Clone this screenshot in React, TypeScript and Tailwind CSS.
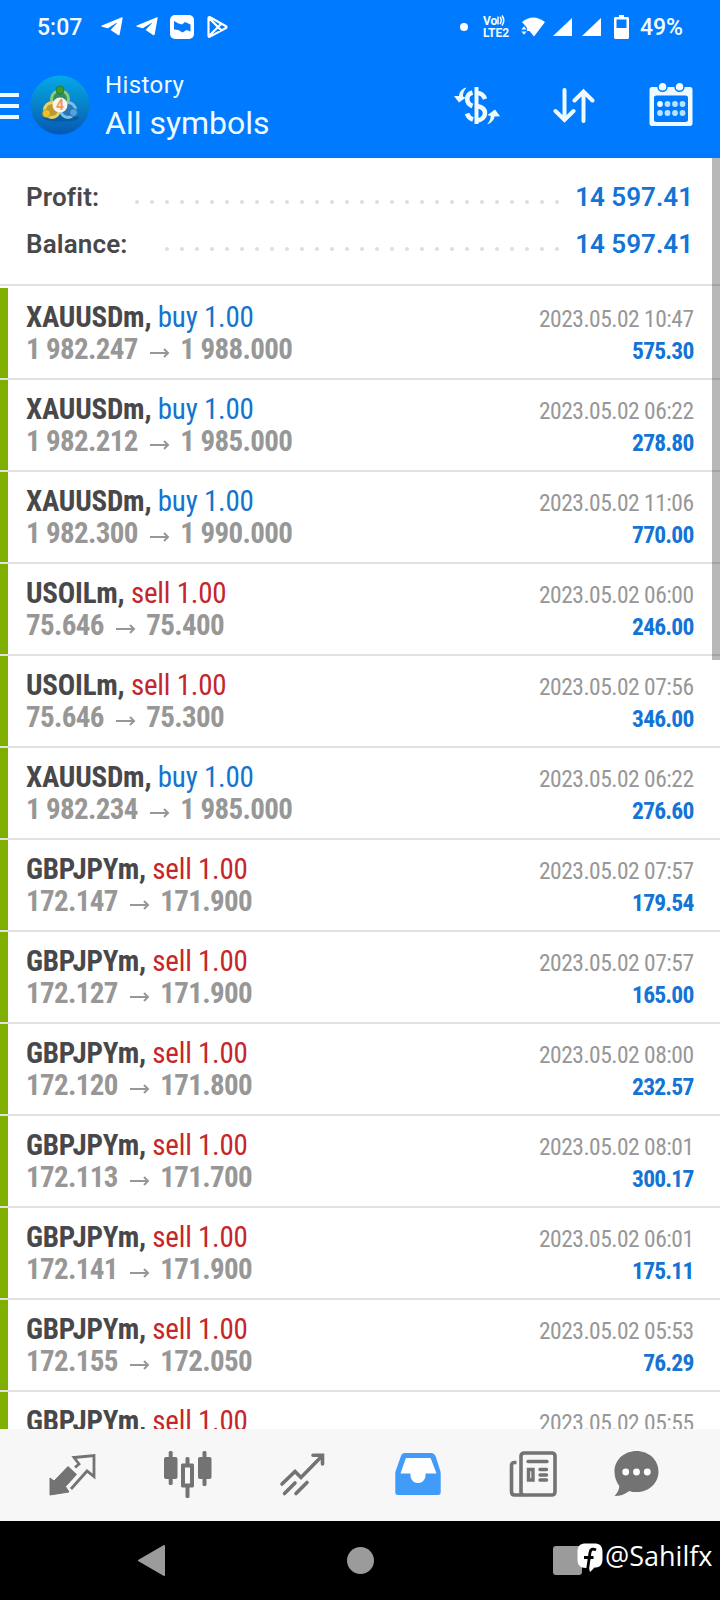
import React from "react";

type Side = "buy" | "sell";

interface Deal {
  symbol: string;
  side: Side;
  open: string;
  close: string;
  time: string;
  profit: string;
}

const deals: Deal[] = [
  { symbol: "XAUUSDm", side: "buy", open: "1 982.247", close: "1 988.000", time: "2023.05.02 10:47", profit: "575.30" },
  { symbol: "XAUUSDm", side: "buy", open: "1 982.212", close: "1 985.000", time: "2023.05.02 06:22", profit: "278.80" },
  { symbol: "XAUUSDm", side: "buy", open: "1 982.300", close: "1 990.000", time: "2023.05.02 11:06", profit: "770.00" },
  { symbol: "USOILm", side: "sell", open: "75.646", close: "75.400", time: "2023.05.02 06:00", profit: "246.00" },
  { symbol: "USOILm", side: "sell", open: "75.646", close: "75.300", time: "2023.05.02 07:56", profit: "346.00" },
  { symbol: "XAUUSDm", side: "buy", open: "1 982.234", close: "1 985.000", time: "2023.05.02 06:22", profit: "276.60" },
  { symbol: "GBPJPYm", side: "sell", open: "172.147", close: "171.900", time: "2023.05.02 07:57", profit: "179.54" },
  { symbol: "GBPJPYm", side: "sell", open: "172.127", close: "171.900", time: "2023.05.02 07:57", profit: "165.00" },
  { symbol: "GBPJPYm", side: "sell", open: "172.120", close: "171.800", time: "2023.05.02 08:00", profit: "232.57" },
  { symbol: "GBPJPYm", side: "sell", open: "172.113", close: "171.700", time: "2023.05.02 08:01", profit: "300.17" },
  { symbol: "GBPJPYm", side: "sell", open: "172.141", close: "171.900", time: "2023.05.02 06:01", profit: "175.11" },
  { symbol: "GBPJPYm", side: "sell", open: "172.155", close: "172.050", time: "2023.05.02 05:53", profit: "76.29" },
  { symbol: "GBPJPYm", side: "sell", open: "172.160", close: "172.050", time: "2023.05.02 05:55", profit: "79.93" },
];

function TelegramIcon() {
  return (
    <svg width="22" height="20" viewBox="0 0 22 20" fill="white">
      <path d="M.8 8.6 20.3.4c.9-.3 1.5.2 1.3 1.2l-2.900 15.600c-.2 1-.9 1.200-1.700.8L9.600 13l6.200-6.700c.3-.4-.1-.6-.5-.3L6.900 11.300l-6-1.600c-.6-.2-.6-.8-.1-1.100z" />
    </svg>
  );
}

function StatusBar() {
  return (
    <div className="flex h-[54px] shrink-0 items-center pr-[37px] pl-[37px] text-[23px] leading-none font-medium text-[#f4fbff]">
      <span className="w-[64px]">5:07</span>
      <TelegramIcon />
      <span className="w-[13px]" />
      <TelegramIcon />
      <svg className="ml-[12px]" width="24" height="24" viewBox="0 0 24 24">
        <rect width="24" height="24" rx="5" fill="white" />
        <path d="M4 6l4.500 2.500L12 9.500l3-2.500 5.500 2.500v7L16.500 15l-4 2.500-4-2.500L4 14.500z" fill="#0879ff" />
      </svg>
      <svg className="ml-[13px]" width="21" height="22" viewBox="0 0 21 22" fill="none" stroke="white" strokeWidth="2.200" strokeLinejoin="round">
        <path d="M1.500 2.200v17.600c0 .9.700 1.200 1.500.8L19 12c.7-.5.700-1.300 0-1.800L3 1.300c-.8-.4-1.500 0-1.500.9zM2 2l12.500 12.500M2 20 14.500 7.500" />
      </svg>
      <span className="flex-1" />
      <span className="mr-[15px] size-2 rounded-full bg-white" />
      <span className="mr-[11px] flex w-[27px] flex-col text-[12px] leading-[12px] font-bold">
        <span className="flex items-start">
          Vo
          <svg width="9" height="11" viewBox="0 0 9 11" fill="none" stroke="white" strokeWidth="1.500">
            <path d="M1 1.500v8M3 2q2.500 3.500 0 7M5 .5q3.500 5 0 10" />
          </svg>
        </span>
        <span>LTE2</span>
      </span>
      <svg width="24" height="20" viewBox="0 0 24 20" fill="white">
        <path d="M1 5Q12-4 24 5L13 19.500 8.500 14H6V10.800z" />
        <path d="M0 14.200h6L3 18zM0 12.800h6L3 9z" stroke="#007bff" strokeWidth=".5" />
      </svg>
      <svg className="ml-[8px]" width="19" height="18" viewBox="0 0 19 18" fill="white">
        <path d="M19 0v18H0z" />
      </svg>
      <svg className="ml-[10px]" width="19" height="18" viewBox="0 0 19 18" fill="white">
        <path d="M19 0v18H0z" />
      </svg>
      <svg className="mr-[11px] ml-[13px]" width="15" height="24" viewBox="0 0 15 24" fill="white">
        <path d="M5 0h5v2h3.500c.8 0 1.500.7 1.500 1.500v19c0 .8-.7 1.500-1.500 1.500h-12C.7 24 0 23.300 0 22.500v-19C0 2.700.7 2 1.500 2H5zM2.500 4.500V13h10V4.500z" fillRule="evenodd" />
      </svg>
      <span>49%</span>
    </div>
  );
}

function AppLogo() {
  return (
    <svg width="60" height="60" viewBox="0 0 60 60">
      <defs>
        <linearGradient id="disc" x1="0" y1="0" x2="0" y2="1">
          <stop offset="0" stopColor="#04a9e8" />
          <stop offset="0.5" stopColor="#0782c8" />
          <stop offset="1" stopColor="#0758b4" />
        </linearGradient>
      </defs>
      <circle cx="30" cy="30" r="29.500" fill="url(#disc)" />
      <ellipse cx="31" cy="43" rx="18" ry="3.500" fill="#064a86" opacity=".5" />
      <circle cx="30" cy="24" r="8.500" fill="#2f8f62" stroke="#8fc97a" strokeWidth="3" />
      <circle cx="22" cy="35" r="7.500" fill="#b99a35" stroke="#e8d263" strokeWidth="3" />
      <circle cx="38" cy="35" r="7.500" fill="#2a78b5" stroke="#7cc0ea" strokeWidth="3" />
      <circle cx="30" cy="15" r="4" fill="#3b9a31" stroke="#1f7a2c" strokeWidth=".8" />
      <circle cx="16.500" cy="38.500" r="4" fill="#edc02c" stroke="#b08a1c" strokeWidth=".8" />
      <circle cx="43.500" cy="37.500" r="4" fill="#4fa3e0" stroke="#1c66a8" strokeWidth=".8" />
      <circle cx="30" cy="30" r="7.500" fill="#f8f4ee" />
      <text x="30" y="35" textAnchor="middle" fontSize="14" fontWeight="700" fill="#ee9a62">4</text>
    </svg>
  );
}

function Header() {
  return (
    <div className="flex h-[103px] shrink-0 text-[#effaff]">
      <div className="mt-[39px] flex w-[19px] flex-col gap-[7px]">
        <span className="h-1 bg-current" />
        <span className="h-1 bg-current" />
        <span className="h-1 bg-current" />
      </div>
      <div className="mt-[21px] ml-[11px]">
        <AppLogo />
      </div>
      <div className="ml-[15px] flex-1 pt-[15px]">
        <div className="text-[24px] leading-[32px] tracking-[0.4px]">History</div>
        <div className="pt-px text-[32px] leading-[43px]">All symbols</div>
      </div>
      <svg className="mt-[33px]" width="46" height="38" viewBox="0 0 46 38" fill="none" stroke="currentColor">
        <path d="M22.500 0v37" strokeWidth="4" />
        <path d="M18.500 5.500c-7 2-7 11 0 13.500M13 26.500c1 3 3 5 6 6" strokeWidth="4.600" />
        <path d="M23 6c4 0 6.500 1.500 8 6M23 19c5 1 8 3 8 7s-3.500 7-8 7.500" strokeWidth="4.600" />
        <path d="M12.500.5C7.500 2 5.500 4.500 5 9H0l5 6.500 7-5-3.200-1C9 6 10 3.500 12.500.5z" fill="currentColor" stroke="none" />
        <path d="M33 37.500c5-2 7-4.500 7.500-8l5.500-.3L41 22.500l-7.500 5.500 3.200 1c-.2 3.500-1.200 5.500-3.700 8.500z" fill="currentColor" stroke="none" />
      </svg>
      <svg className="mt-[34px] ml-[53px]" width="42" height="36" viewBox="0 0 42 36" fill="none" stroke="currentColor" strokeWidth="4" strokeLinecap="round" strokeLinejoin="miter">
        <path d="M11.500 2v30M2.500 23l9 9 9-9M30.500 33V3.500M21.500 12.500l9-9 9 9" />
      </svg>
      <svg className="mt-[28px] mr-[27px] ml-[54px]" width="44" height="44" viewBox="0 0 44 44" fill="currentColor">
        <path d="M3 5h38c1.600 0 2.500 1 2.500 2.500v34c0 1.500-.9 2.500-2.500 2.500H3C1.400 44 .5 43 .5 41.500v-34C.5 6 1.400 5 3 5zm4.500 8.500c-1.800 0-2.500.8-2.500 2.500v21.500c0 1.700.7 2.500 2.500 2.500h29c1.800 0 2.500-.8 2.500-2.500V16c0-1.700-.7-2.500-2.500-2.500z" fillRule="evenodd" />
        <g stroke="#007bff" strokeWidth="1.500">
          <circle cx="13.500" cy="4.800" r="4.500" />
          <circle cx="30.500" cy="4.800" r="4.500" />
        </g>
        <g>
          <circle cx="11" cy="22" r="2.900" />
          <circle cx="18.500" cy="22" r="2.900" fill="#b8e3ff" />
          <circle cx="26" cy="22" r="2.900" fill="#b8e3ff" />
          <circle cx="33.500" cy="22" r="2.900" fill="#b8e3ff" />
          <circle cx="11" cy="31" r="2.900" fill="#b8e3ff" />
          <circle cx="18.500" cy="31" r="2.900" fill="#b8e3ff" />
          <circle cx="26" cy="31" r="2.900" fill="#b8e3ff" />
          <circle cx="33.500" cy="31" r="2.900" fill="#b8e3ff" />
        </g>
      </svg>
    </div>
  );
}

function SummaryRow({ label, value, dots }: { label: string; value: string; dots: number }) {
  return (
    <div className="flex h-[47px] items-center pr-[27px] pl-[26px] text-[26px] leading-none font-semibold">
      <span className="flex-1 tracking-[0.15px] text-[#48484a]">{label}</span>
      <span className="mt-[11px] mr-[16px] flex gap-[11px]">
        {Array.from({ length: dots }, (_, i) => (
          <span key={i} className="size-1 rounded-full bg-[#dedede]" />
        ))}
      </span>
      <span className="text-[#1374d6]">{value}</span>
    </div>
  );
}

function DealRow({ deal }: { deal: Deal }) {
  return (
    <div className="flex h-[92px] shrink-0 border-b-2 border-[#e2e2e2]">
      <div className="w-[7.5px] bg-[#7fb001]" />
      <div className="flex flex-1 justify-between pt-[13px] pr-[26.5px] pl-[18.5px] font-['Roboto_Condensed',Roboto,sans-serif] font-stretch-condensed">
        <div className="text-[29px] leading-[32px] whitespace-pre">
          <div className="tracking-[-0.22px]">
            <span className="font-bold text-[#48484a]">{deal.symbol}, </span>
            <span className={deal.side === "buy" ? "text-[#1374cf]" : "text-[#c4262b]"}>{deal.side} 1.00</span>
          </div>
          <div className="flex items-center font-bold tracking-[-0.65px] text-[#979797]">
            {deal.open}
            <svg className="mr-[10.500px] ml-[12px] mt-[8px]" width="20" height="10" viewBox="0 0 20 10" fill="none" stroke="currentColor" strokeWidth="2">
              <path d="M0 5h18M14 1l4 4-4 4" />
            </svg>
            {deal.close}
          </div>
        </div>
        <div className="pt-[2px] text-right text-[23.5px] leading-[32px]">
          <div className="tracking-[-0.5px] text-[#979797]">{deal.time}</div>
          <div className="font-bold tracking-[-0.8px] text-[#1374d6]">{deal.profit}</div>
        </div>
      </div>
    </div>
  );
}

function TabBar() {
  return (
    <div className="flex h-[92px] shrink-0 items-start bg-[#f7f7f7] pt-[22px] text-[#737373]">
      <svg className="mt-px ml-[49px]" width="48" height="46" viewBox="0 0 48 46">
        <path d="m19 14.500 8.500 8L16.500 34.500l3.500 5.500-19 3V26l4 3z" fill="currentColor" stroke="currentColor" strokeLinejoin="round" />
        <path d="m26 15.500 4-3.500-5-6.500 20-2v21l-7-5.500-16 18" fill="none" stroke="currentColor" strokeWidth="2.800" />
      </svg>
      <svg className="ml-[67px]" width="48" height="48" viewBox="0 0 48 48" fill="currentColor">
        <rect x="4.700" y="0" width="4" height="34" rx="1.500" />
        <rect x="0" y="6" width="13.500" height="22" rx="2" />
        <rect x="38.500" y="0" width="4" height="35" rx="1.500" />
        <rect x="34" y="6" width="13.500" height="22" rx="2" />
        <rect x="21.500" y="6" width="4" height="8" rx="1.500" />
        <rect x="21.500" y="35" width="4" height="12" rx="1.500" />
        <path d="M17 14.500c0-1.500.5-2 2-2h9c1.500 0 2 .5 2 2v20c0 1.500-.5 2-2 2h-9c-1.500 0-2-.5-2-2zm4 2v16h5v-16z" fillRule="evenodd" />
      </svg>
      <svg className="ml-[67px]" width="46" height="46" viewBox="0 0 46 46" fill="none" stroke="currentColor" strokeWidth="3.600" strokeLinecap="round">
        <path d="m3 33 13-12.500 6 6L43 5M34 4.300h9.500V13M5.500 42.500 16 32M17 42.500 28 31.500" />
      </svg>
      <svg className="mt-[2px] ml-[69.500px]" width="46" height="42" viewBox="0 0 46 42" fill="#419bf8">
        <path d="M10 0h26c2 0 3.500 1 4.500 3L45 17c.5 1.500.7 2.500.7 4v18c0 2-.8 3-2.700 3H3c-2 0-2.700-1-2.700-3V21c0-1.500.2-2.500.7-4L6 3c.7-2 2-3 4-3z" />
        <path d="M12 5h22.500c.8 0 1.200.3 1.500 1l5.500 14.500h-11V22c0 4.500-3 8-7.500 8s-7.500-3.500-7.500-8v-1.500h-10L10.500 6c.3-.7.700-1 1.500-1z" fill="white" />
      </svg>
      <svg className="ml-[68.500px]" width="48" height="46" viewBox="0 0 48 46" fill="none" stroke="currentColor" strokeWidth="3.600">
        <rect x="12" y="2" width="34" height="42" rx="3" />
        <path d="M7.500 11.500H5.500c-2 0-3 1-3 3v26c0 2 1 3.500 3 3.500H14" />
        <path d="M19 10.500h19M31 18.500h6.500M31 24h6.500M31 29h6.500M19.500 18.500h4.500v10.500h-4.500z" strokeWidth="3.400" strokeLinecap="round" />
      </svg>
      <svg className="ml-[56.500px]" width="45" height="46" viewBox="0 0 46 47" fill="currentColor">
        <path d="M23 0c12.500 0 22.500 9 22.500 21S35.500 42 23 42c-3 0-5-.4-7.500-1.200C11 44.500 6 46 .5 46c3-3 4.500-6 5-10C2.500 32 .5 27 .5 21 .5 9 10.500 0 23 0z" />
        <g fill="white">
          <circle cx="12" cy="21.500" r="3.500" />
          <circle cx="23" cy="21.500" r="3.500" />
          <circle cx="34" cy="21.500" r="3.500" />
        </g>
      </svg>
    </div>
  );
}

function NavBar() {
  return (
    <div className="flex h-[79px] shrink-0 items-start bg-black pt-[22px]">
      <svg className="mt-[2px] ml-[138px]" width="27" height="31" viewBox="0 0 27 31">
        <path d="M1 15.500 26 1v29z" fill="#9b9b9b" stroke="#9b9b9b" strokeWidth="2" strokeLinejoin="round" />
      </svg>
      <span className="mt-[4px] ml-[182px] size-[27px] rounded-full bg-[#9b9b9b]" />
      <span className="mt-[3px] ml-[179px] h-[29px] w-[29px] rounded-[3px] bg-[#9b9b9b]" />
      <svg className="-ml-[5px]" width="26" height="30" viewBox="0 0 26 30">
        <path d="M9 .5h8c6 0 8.500 2.500 8.500 8.500v7c0 6-2.500 8.500-8 8.500L13 29l-1-4H9C3 25 .5 22 .5 16V9C.5 3 3 .5 9 .5z" fill="white" />
        <path d="M19 7c-3.500-2-5.500-.5-6 2.500L10.500 27M7 14.500h9.500" fill="none" stroke="black" strokeWidth="2.800" />
      </svg>
      <span className="-mt-px ml-[2px] font-['Open_Sans',sans-serif] text-[27px] leading-[28px] text-white">@Sahilfx</span>
    </div>
  );
}

export default function App() {
  return (
    <div className="flex h-[1600px] w-[720px] flex-col overflow-hidden bg-white font-[Roboto,sans-serif]">
      <div className="flex h-[158px] shrink-0 flex-col bg-[#007bff]">
        <StatusBar />
        <Header />
      </div>
      <div className="relative flex h-[1271px] shrink-0 flex-col overflow-hidden">
        <div className="mb-[2px] h-[128px] shrink-0 border-b-2 border-[#e2e2e2] pt-[15px]">
          <SummaryRow label="Profit:" value="14 597.41" dots={29} />
          <SummaryRow label="Balance:" value="14 597.41" dots={27} />
        </div>
        {deals.map((deal, i) => (
          <DealRow key={i} deal={deal} />
        ))}
        <div className="absolute top-0 right-0 h-[502px] w-2 bg-black/28" />
      </div>
      <TabBar />
      <NavBar />
    </div>
  );
}
